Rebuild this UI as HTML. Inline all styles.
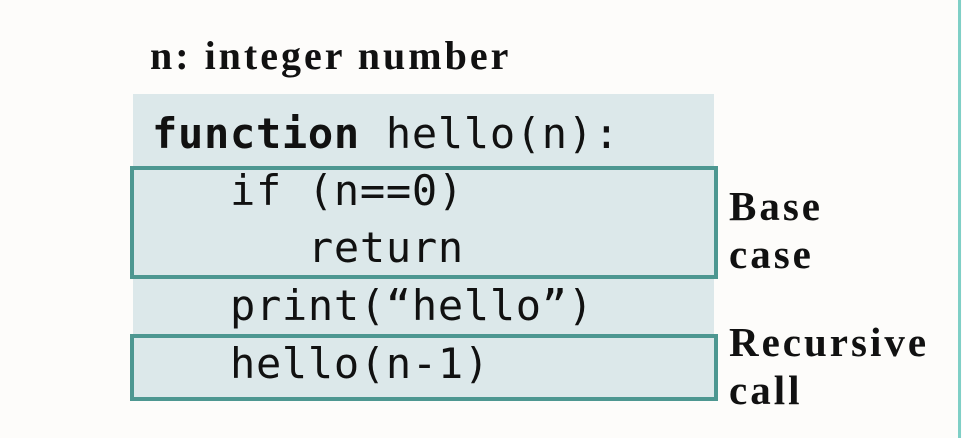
<!DOCTYPE html>
<html><head><style>
html,body{margin:0;padding:0;width:962px;height:438px;overflow:hidden;background:#fdfcfa;position:relative}
.t{position:absolute;font-family:"Liberation Serif",serif;font-weight:bold;color:#111;white-space:nowrap;line-height:1}
.c{position:absolute;font-family:"DejaVu Sans Mono","Liberation Mono",monospace;font-size:42px;color:#111;white-space:pre;letter-spacing:0.7px;line-height:1}
.box{position:absolute;border:4px solid #4d9791;box-sizing:border-box}
</style></head><body>
<div class="t" style="left:150px;top:36px;font-size:40px;letter-spacing:3px">n: integer number</div>
<div style="position:absolute;left:133px;top:94px;width:581px;height:306px;background:#dce8ea"></div>
<div class="box" style="left:130px;top:166px;width:588px;height:113px"></div>
<div class="box" style="left:130px;top:334px;width:588px;height:67px"></div>
<div class="c" style="left:152px;top:113px"><b>function</b> hello(n):</div>
<div class="c" style="left:152px;top:170px">   if (n==0)</div>
<div class="c" style="left:152px;top:227px">      return</div>
<div class="c" style="left:152px;top:285px">   print(“hello”)</div>
<div class="c" style="left:152px;top:343px">   hello(n-1)</div>
<div class="t" style="left:729px;top:186px;font-size:41px;letter-spacing:3px">Base</div>
<div class="t" style="left:729px;top:234px;font-size:41px;letter-spacing:3px">case</div>
<div class="t" style="left:729px;top:322px;font-size:41px;letter-spacing:3px">Recursive</div>
<div class="t" style="left:729px;top:370px;font-size:41px;letter-spacing:3px">call</div>
<div style="position:absolute;left:958px;top:0;width:3px;height:438px;background:#7fcfc6"></div>
</body></html>
